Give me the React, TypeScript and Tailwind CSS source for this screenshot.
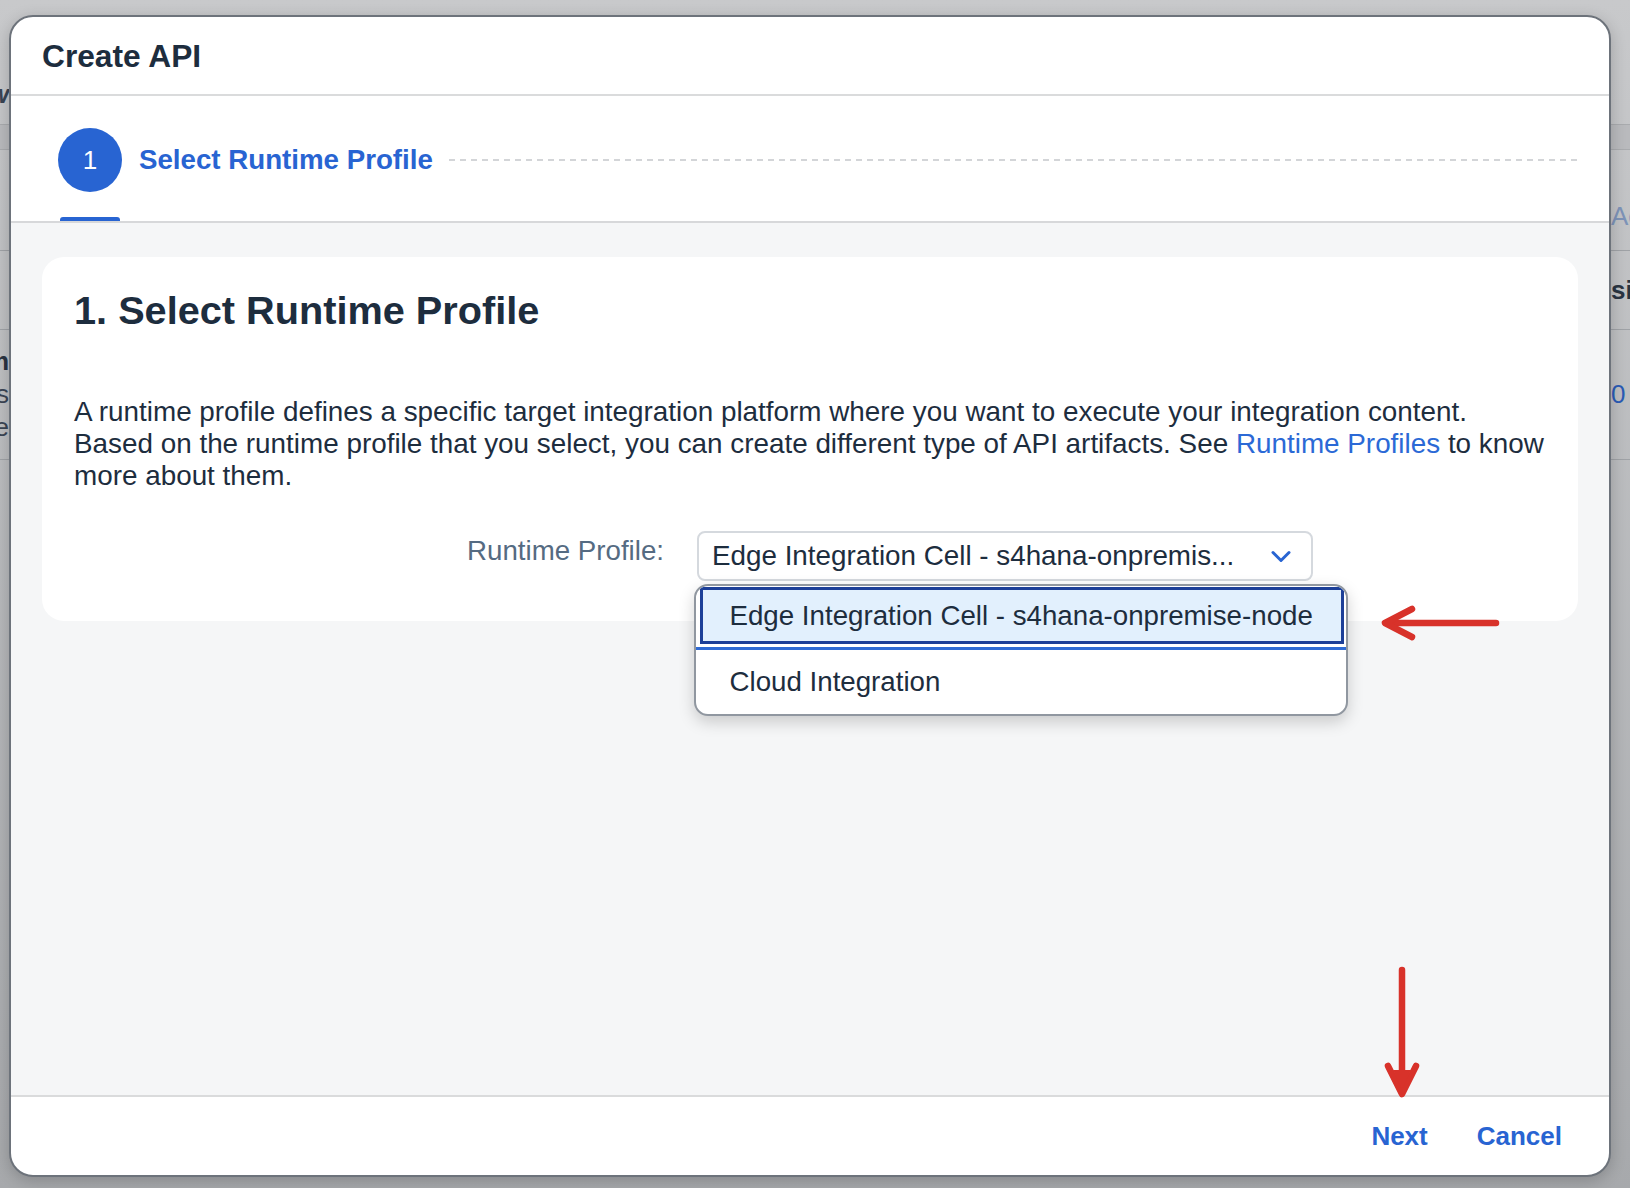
import React from 'react';

const Backdrop = () => (
  <div className="flex h-full flex-col text-[26px]">
    <div className="flex h-[124px] items-end justify-between pb-[10px]">
      <div className="flex w-[9px] justify-end overflow-hidden">
        <span className="font-bold italic text-[#3a4554]">New</span>
      </div>
    </div>
    <div className="h-[26px] border-y border-[#a9abae] bg-[#b9babd]" />
    <div className="flex h-[100px] items-end justify-end pb-[14px]">
      <div className="w-[19px] overflow-hidden whitespace-nowrap">
        <span className="text-[#7d93b8]">Actions</span>
      </div>
    </div>
    <div className="flex h-[80px] items-center justify-end border-y border-[#9fa2a6]">
      <div className="w-[19px] overflow-hidden whitespace-nowrap">
        <span className="font-bold text-[#2a3442]">sion</span>
      </div>
    </div>
    <div className="flex h-[130px] items-center justify-between border-b border-[#9fa2a6]">
      <div className="flex w-[9px] flex-col items-end overflow-hidden leading-[33px]">
        <span className="font-bold text-[#2a3442]">m</span>
        <span className="text-[#3a4554]">s</span>
        <span className="text-[#3a4554]">e</span>
      </div>
      <div className="w-[19px] overflow-hidden whitespace-nowrap">
        <span className="text-[#2a5bb5]">0</span>
      </div>
    </div>
  </div>
);

const Chevron = () => (
  <svg width="20" height="13" viewBox="0 0 20 13" fill="none">
    <path d="M2 2.5 L10 10.5 L18 2.5" stroke="#2864d2" strokeWidth="3" strokeLinecap="round" strokeLinejoin="round" />
  </svg>
);

const RuntimeSelect = () => (
  <div className="relative h-[50px] w-[616px]">
    <div className="flex h-full items-center rounded-[8px] border-2 border-[#d5d9de] bg-white pl-[13px] pr-[20px]">
      <span className="flex-1 overflow-hidden whitespace-nowrap text-[27.8px]">
        Edge Integration Cell - s4hana-onpremis...
      </span>
      <Chevron />
    </div>
    <div className="absolute left-[-3.5px] top-[53px] z-10 w-[654px] overflow-hidden rounded-[14px] border-2 border-[#9097a0] bg-white shadow-[0_6px_16px_rgba(0,0,0,0.18)]">
      <div className="border-b-[3px] border-[#2f6bd4] pb-[3px] pl-[4px] pr-[2px] pt-[1px]">
        <div className="flex h-[57px] items-center border-[3px] border-[#1c3f98] bg-[#e2f0fd] pl-[27px] text-[27.7px]">
          Edge Integration Cell - s4hana-onpremise-node
        </div>
      </div>
      <div className="flex h-[64px] items-center pl-[34px] text-[27.7px]">Cloud Integration</div>
    </div>
  </div>
);

export default function App() {
  return (
    <div className="relative h-[1188px] w-[1630px] overflow-hidden bg-linear-to-b from-[#c8c9cb] to-[#a7a9ac] font-['Liberation_Sans',Arial,sans-serif] text-[#1d2d3e]">
      <Backdrop />

      <div className="absolute left-[9px] top-[15px] flex h-[1162px] w-[1602px] flex-col overflow-hidden rounded-[24px] border-2 border-[#6d737b] bg-white shadow-[0_4px_16px_rgba(0,0,0,0.2)]">
        <header className="flex h-[79px] shrink-0 items-center border-b-2 border-[#dadbdc] pl-[31px] pt-[2px]">
          <h1 className="text-[31.7px] font-bold leading-none">Create API</h1>
        </header>

        <div className="flex h-[127px] shrink-0 flex-col border-b-2 border-[#d7d8da] bg-white">
          <div className="mt-[32px] flex h-[64px] items-center pl-[47px] pr-[30px]">
            <div className="flex size-[64px] items-center justify-center rounded-full bg-[#2864d2] text-[26px] text-white">
              1
            </div>
            <span className="ml-[17px] text-[27.7px] font-bold text-[#2864d2]">Select Runtime Profile</span>
            <div className="ml-[16px] h-[2px] flex-1 bg-[repeating-linear-gradient(to_right,#d3d5d8_0_6px,transparent_6px_11px)]" />
          </div>
          <div className="ml-[49px] mt-auto h-[4px] w-[60px] rounded-t-[3px] bg-[#2864d2]" />
        </div>

        <main className="flex-1 bg-[#f5f6f7] px-[31px] pt-[34px]">
          <section className="rounded-[22px] bg-white px-[32px] pb-[40px] pt-[29px]">
            <h2 className="text-[39.7px] font-bold leading-[48px]">1. Select Runtime Profile</h2>
            <p className="mt-[62px] whitespace-nowrap text-[27.85px] leading-[32px]">
              A runtime profile defines a specific target integration platform where you want to execute your integration content.
              <br />
              Based on the runtime profile that you select, you can create different type of API artifacts. See{' '}
              <a className="text-[#2b69d6]">Runtime Profiles</a> to know
              <br />
              more about them.
            </p>
            <div className="mt-[39px] flex items-start">
              <label className="mt-[4px] w-[590px] text-right text-[27.7px] leading-[32px] text-[#556b82]">
                Runtime Profile:
              </label>
              <div className="ml-[33px]">
                <RuntimeSelect />
              </div>
            </div>
          </section>
        </main>

        <footer className="flex h-[80px] shrink-0 items-center justify-end gap-[49px] border-t-2 border-[#dadbdc] pr-[47px]">
          <button className="text-[26px] font-bold text-[#2864d2]">Next</button>
          <button className="text-[26px] font-bold text-[#2864d2]">Cancel</button>
        </footer>
      </div>

      <svg className="pointer-events-none absolute inset-0 h-full w-full" viewBox="0 0 1630 1188" fill="none">
        <g stroke="#d8322a" strokeWidth="6.5" strokeLinecap="round" strokeLinejoin="round">
          <path d="M1386 623 L1496 623" />
          <path d="M1412 609 L1385 623 L1412 637" />
          <path d="M1402 970 L1402 1090" />
          <path d="M1388 1066 L1402 1094 L1416 1066" />
        </g>
        <path d="M1393 1070 L1402 1090 L1411 1070 Z" fill="#d8322a" />
      </svg>
    </div>
  );
}
